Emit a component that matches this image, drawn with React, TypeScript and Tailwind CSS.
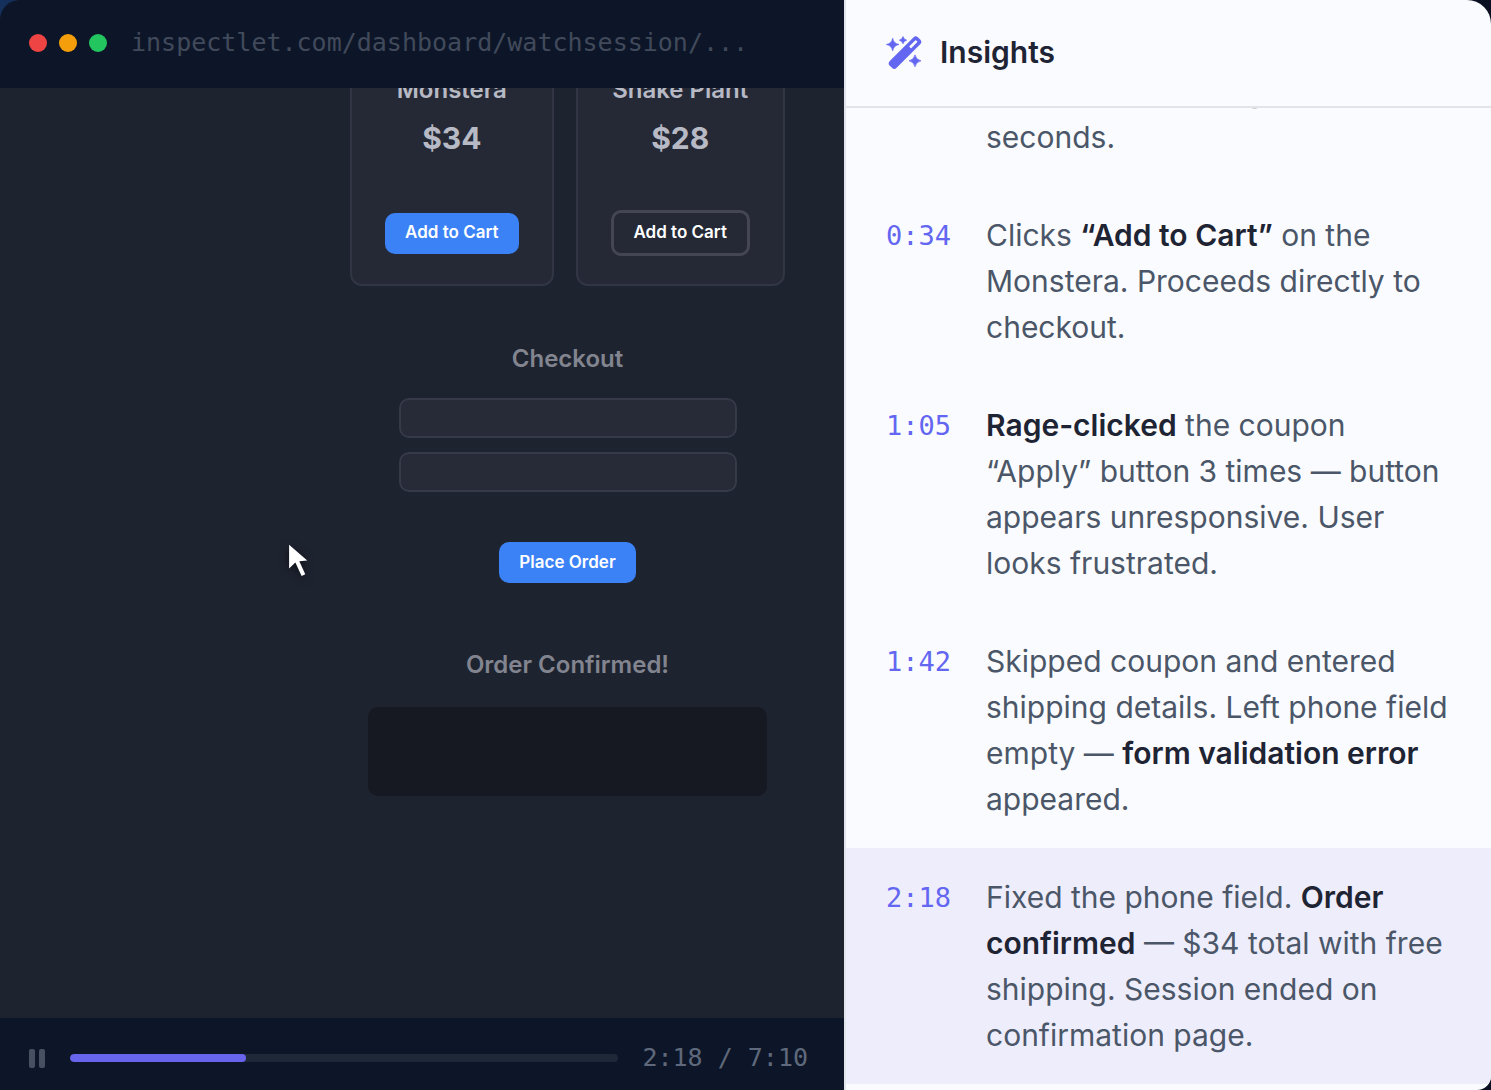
import React from "react";

type Entry = { time: string; body: React.ReactNode; active?: boolean };

const B = ({ children }: { children: React.ReactNode }) => (
  <strong className="font-semibold text-[#1e2433]">{children}</strong>
);

const entries: Entry[] = [
  { time: "0:12", body: <>Lands on store, lingers for 20 seconds.</> },
  { time: "0:34", body: <>Clicks <B>“Add to Cart”</B> on the Monstera. Proceeds directly to checkout.</> },
  { time: "1:05", body: <><B>Rage-clicked</B> the coupon “Apply” button 3 times — button appears unresponsive. User looks frustrated.</> },
  { time: "1:42", body: <>Skipped coupon and entered shipping details. Left phone field empty — <B>form validation error</B> appeared.</> },
  { time: "2:18", active: true, body: <>Fixed the phone field. <B>Order confirmed</B> — $34 total with free shipping. Session ended on confirmation page.</> },
];

function WandIcon() {
  return (
    <svg viewBox="76 103 108 104" className="h-[35px] w-9 shrink-0" aria-hidden="true">
      <g fill="#6366f1">
        <rect x="73" y="141" width="120" height="29" rx="10" transform="rotate(-45 133 155.5)" />
        <path d="M96 112Q99 128 115 131Q99 134 96 150Q93 134 77 131Q93 128 96 112Z" stroke="#6366f1" strokeWidth="2" strokeLinejoin="round" />
        <path d="M127 107Q129 116 138 118Q129 120 127 129Q125 120 116 118Q125 116 127 107Z" stroke="#6366f1" strokeWidth="2" strokeLinejoin="round" />
        <path d="M163 162Q166 177 181 180Q166 183 163 198Q160 183 145 180Q160 177 163 162Z" stroke="#6366f1" strokeWidth="2" strokeLinejoin="round" />
      </g>
      <rect x="144" y="126" width="28" height="8" rx="2" fill="#fafbfe" transform="rotate(-45 158 130)" />
    </svg>
  );
}

function Cursor() {
  return (
    <svg viewBox="0 0 60 100" className="absolute top-[456px] left-[288px] h-[33px] w-5 overflow-visible drop-shadow-[0_2px_4px_rgba(0,0,0,0.6)]" aria-hidden="true">
      <path d="M3 2V74L22 56L41 97L52 92L34 52L58 50Z" fill="#fff" />
    </svg>
  );
}

function Product({ name, price, outlined }: { name: string; price: string; outlined?: boolean }) {
  return (
    <article className="flex flex-col items-center rounded-xl border-2 border-[#323543] bg-[#252936] px-[33px] pt-5 pb-7 text-[#b7bac5]">
      <h3 className="text-2xl leading-7 font-semibold">{name}</h3>
      <p className="mt-4 text-[30px] leading-9 font-bold">{price}</p>
      <div className="mt-[54px] flex h-[46px] items-center">
        <button
          type="button"
          className={
            outlined
              ? "h-[46px] rounded-[10px] border-[3px] border-[#444653] px-5 text-[17px] font-semibold text-white"
              : "h-[41px] rounded-[10px] bg-[#3b82f6] px-5 text-[17px] font-semibold text-white"
          }
        >
          Add to Cart
        </button>
      </div>
    </article>
  );
}

export default function App() {
  return (
    <div className="h-screen overflow-hidden bg-linear-to-r from-[#14305c] via-[#0b1226] via-10% to-[#0b0f22] font-[Inter,sans-serif]">
      <div className="grid h-full grid-cols-[844fr_647fr] overflow-hidden rounded-tl-[20px] rounded-tr-3xl rounded-br-[14px]">
        <section className="flex min-w-0 flex-col overflow-hidden bg-[#0d1628]">
          <header className="flex h-[88px] shrink-0 items-center gap-3 pb-0.5 pl-[29px]">
            <span className="size-[18px] rounded-full bg-[#ef4444]" />
            <span className="size-[18px] rounded-full bg-[#f59e0b]" />
            <span className="size-[18px] rounded-full bg-[#22c55e]" />
            <span className="ml-3 truncate font-['DejaVu_Sans_Mono',monospace] text-[25px] text-[#414a5b]">
              inspectlet.com/dashboard/watchsession/...
            </span>
          </header>

          <main className="relative flex min-h-0 flex-1 flex-col items-center justify-end overflow-hidden bg-[#1e2330] pb-[222px] pl-[291px]">
            <div className="flex gap-[22px]">
              <Product name="Monstera" price="$34" />
              <Product name="Snake Plant" price="$28" outlined />
            </div>
            <h2 className="mt-[57px] text-2xl leading-8 font-semibold text-[#82858f]">Checkout</h2>
            <input type="text" aria-label="Full name" className="mt-[23px] h-10 w-[338px] shrink-0 rounded-[10px] border-2 border-[#363947] bg-[#272b38]" />
            <input type="text" aria-label="Phone number" className="mt-[14px] h-10 w-[338px] shrink-0 rounded-[10px] border-2 border-[#363947] bg-[#272b38]" />
            <button type="button" className="mt-[50px] h-[41px] shrink-0 rounded-[10px] bg-[#3b82f6] px-5 text-[17px] font-semibold text-white">
              Place Order
            </button>
            <h2 className="mt-[66px] text-2xl leading-8 font-semibold text-[#82858f]">Order Confirmed!</h2>
            <div className="mt-[26px] h-[89px] w-[399px] shrink-0 rounded-[10px] bg-[#161822]" />
            <Cursor />
          </main>

          <footer className="flex h-[72px] shrink-0 items-center pt-2 pr-9 pl-[29px]">
            <button type="button" aria-label="Pause" className="flex gap-1">
              <span className="h-[19px] w-1.5 rounded-[2px] bg-[#475060]" />
              <span className="h-[19px] w-1.5 rounded-[2px] bg-[#475060]" />
            </button>
            <progress
              aria-label="Playback position"
              value={138}
              max={430}
              className="mr-6 ml-[25px] block h-2 min-w-0 flex-1 appearance-none overflow-hidden rounded-full bg-[#1f2838] [&::-webkit-progress-bar]:bg-[#1f2838] [&::-webkit-progress-value]:rounded-full [&::-webkit-progress-value]:bg-[#6865ec]"
            />
            <span className="font-['DejaVu_Sans_Mono',monospace] text-[25px] leading-8 whitespace-pre text-[#5f697b]">2:18 / 7:10</span>
          </footer>
        </section>

        <aside className="flex min-w-0 flex-col overflow-hidden border-l-2 border-[#e2e5ec] bg-[#fafbfe]">
          <header className="flex h-[108px] shrink-0 items-center gap-[18px] border-b-2 border-[#e2e4e9] pb-0.5 pl-10">
            <WandIcon />
            <h1 className="text-[30px] leading-9 font-semibold text-[#1e2433]">Insights</h1>
          </header>
          <ol className="flex min-h-0 flex-1 flex-col justify-end overflow-hidden pb-1.5">
            {entries.map((e) => (
              <li key={e.time} className={e.active ? "flex bg-[#eeedfb] py-[26px] pr-10 pl-10" : "flex py-[26px] pr-10 pl-10"}>
                <time className="w-[100px] shrink-0 font-['DejaVu_Sans_Mono',monospace] text-[27px] leading-[48px] text-[#6366f1]">{e.time}</time>
                <p className="min-w-0 flex-1 text-[30px] leading-[46px] text-[#4b5768]">{e.body}</p>
              </li>
            ))}
          </ol>
        </aside>
      </div>
    </div>
  );
}
